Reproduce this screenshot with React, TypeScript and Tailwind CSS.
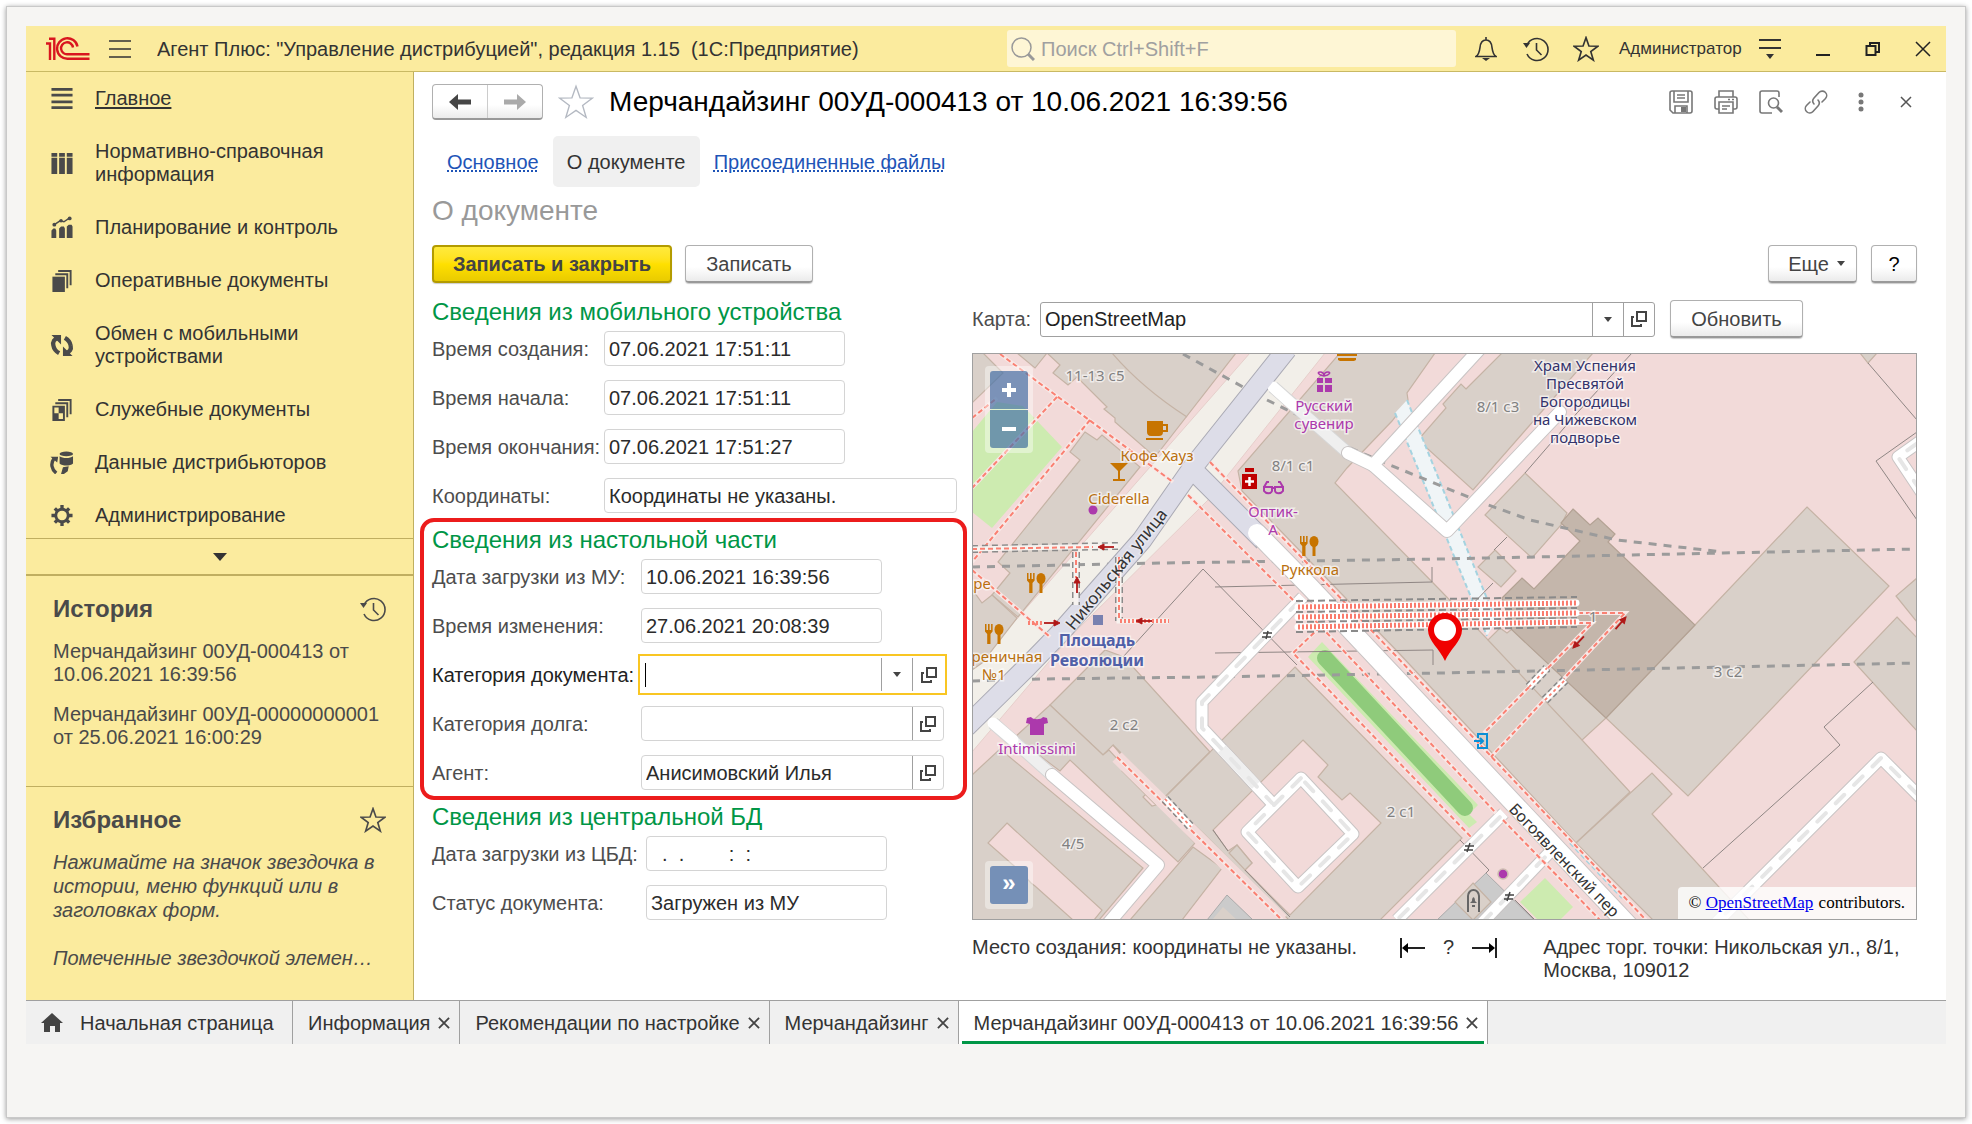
import type { ReactNode } from "react";

const NAV = [
  { label: "Главное", icon: "lines", active: true },
  { label: "Нормативно-справочная информация", icon: "books" },
  { label: "Планирование и контроль", icon: "chart" },
  { label: "Оперативные документы", icon: "docs" },
  { label: "Обмен с мобильными устройствами", icon: "sync" },
  { label: "Служебные документы", icon: "service" },
  { label: "Данные дистрибьюторов", icon: "database" },
  { label: "Администрирование", icon: "gear" },
];

const TABS = [
  { label: "Информация" },
  { label: "Рекомендации по настройке" },
  { label: "Мерчандайзинг" },
  { label: "Мерчандайзинг 00УД-000413 от 10.06.2021 16:39:56", active: true },
];

const NAV_ICONS: Record<string, ReactNode> = {
  lines: <path d="M1 1h22v3H1zM1 7h22v3H1zM1 14h22v3H1zM1 20h22v3H1z" />,
  books: (
    <path d="M1 1h6v4H1zM9 1h6v4H9zM17 1h6v4h-6zM1 6h6v17H1zM9 6h6v17H9zM17 6h6v17h-6z" />
  ),
  chart: (
    <>
      <path d="M1 15l2-2h2l1 2v8H1zM9 13l2-2h3l1 2v10H9zM17 11l2-2h3l1 2v12h-6z" />
      <path d="M4 9l6-4 4 1 6-4" fill="none" stroke="currentColor" strokeWidth="1.5" />
      <circle cx="4" cy="9" r="2" />
      <circle cx="11" cy="5" r="1.8" />
      <circle cx="20" cy="2.5" r="2" />
    </>
  ),
  docs: (
    <>
      <path d="M2 8h13v16H2z" />
      <path d="M5 5.5h12.500V20M8 2h13v15" fill="none" stroke="currentColor" strokeWidth="2" />
    </>
  ),
  sync: (
    <>
      <path d="M8 4C4 5 2 8 3 12c.5 3 2.500 6 6 8" fill="none" stroke="currentColor" strokeWidth="4.500" />
      <path d="M16 20c4-1 6-4 5-8-.5-3-2.500-6-6-8" fill="none" stroke="currentColor" strokeWidth="4.500" />
      <path d="M1 1h10v10zM23 23H13V13z" />
    </>
  ),
  service: (
    <>
      <path d="M3 9h11v14H3z" fill="none" stroke="currentColor" strokeWidth="2" />
      <path d="M8.500 9H14v7H8.500zM3 16h5.500v7H3z" />
      <path d="M5 5.500h12.500V20M8 2h13v15" fill="none" stroke="currentColor" strokeWidth="2" />
    </>
  ),
  database: (
    <>
      <ellipse cx="16.500" cy="3" rx="7" ry="2.500" />
      <path d="M9.500 5.500c3 2.500 11 2.500 14 0V13c-3 3-11 3-14 0z" />
      <path d="M6 23C1 19 0 13 3.500 8" fill="none" stroke="currentColor" strokeWidth="3.500" />
      <path d="M0 6h8l-1 6zM11 24l2-7 6-1-1 5-4 3z" />
    </>
  ),
  gear: (
    <>
      <circle cx="12" cy="12" r="6.500" fill="none" stroke="currentColor" strokeWidth="3" />
      <path
        d="M12 1v4M12 19v4M1 12h4M19 12h4M4.500 4.500l2.500 2.500M17 17l2.500 2.500M4.500 19.500L7 17M17 7l2.500-2.500"
        stroke="currentColor"
        strokeWidth="3.500"
      />
    </>
  ),
};

const Star = ({ size, color, width = 1.5 }: { size: number; color: string; width?: number }) => (
  <svg width={size} height={size} viewBox="0 0 24 24" fill="none" stroke={color} strokeWidth={width}>
    <path d="M12 1.500l2.700 7.700 8.300.2-6.600 4.900 2.400 8-6.800-4.700-6.800 4.700 2.400-8L1 9.400l8.300-.2z" />
  </svg>
);

const History = ({ color = "#333" }: { color?: string }) => (
  <svg width="26" height="26" viewBox="0 0 26 26" fill="none" stroke={color} strokeWidth="1.600">
    <path d="M4 9a11 11 0 1 1 0 9" />
    <path d="M13.500 7v7l5 5" />
    <path d="M0 7h7l-3.500 5z" fill={color} stroke="none" />
  </svg>
);

const OpenIcon = () => (
  <svg width="16" height="16" viewBox="0 0 16 16" fill="none" stroke="#444" strokeWidth="2">
    <path d="M6 1h9v9H6zM3 6H1v9h9v-2" />
  </svg>
);

const Caret = () => (
  <svg width="8" height="5" viewBox="0 0 8 5" fill="#444">
    <path d="M0 0h8L4 5z" />
  </svg>
);

const CloseX = () => (
  <svg width="12" height="12" viewBox="0 0 13 13" stroke="#444" strokeWidth="2">
    <path d="M1 1l11 11M12 1L1 12" />
  </svg>
);

function TitleBar() {
  return (
    <header className="flex h-[46px] items-center border-b border-[#c9b964] bg-[#fbeb9e] pl-5">
      <svg width="44" height="24" viewBox="0 0 44 24" fill="none" stroke="#d9161f" strokeWidth="2.400">
        <path d="M0 6.500h4V23M3 1.700h5.300V23" />
        <path d="M31.500 9.500A10.300 10.300 0 1 0 22 21.800H43.500" />
        <path d="M27 10.500A6 6 0 1 0 22 17.200H43.500" />
      </svg>
      <button aria-label="Меню" className="ml-[19px]">
        <svg width="22" height="18" viewBox="0 0 22 18" stroke="#333" strokeWidth="1.600">
          <path d="M0 1h22M0 9h22M0 17h22" />
        </svg>
      </button>
      <h1 className="ml-[26px] flex-1 truncate text-xl text-[#333]">
        Агент Плюс: "Управление дистрибуцией", редакция 1.15&nbsp; (1С:Предприятие)
      </h1>
      <label className="flex h-[37px] w-[449px] items-center gap-[6px] rounded-[3px] bg-[#fef6d5] pl-1">
        <svg width="24" height="24" viewBox="0 0 24 24" fill="none" stroke="#999">
          <circle cx="10.500" cy="10.500" r="9.500" strokeWidth="1.500" />
          <path d="M17 17l6 6" strokeWidth="3" />
        </svg>
        <input
          aria-label="Поиск"
          placeholder="Поиск Ctrl+Shift+F"
          className="flex-1 bg-transparent text-xl outline-none placeholder:text-[#a0a0a0]"
        />
      </label>
      <div className="-mr-[2px] ml-[5px] flex items-center [&_button]:flex [&_button]:w-[50px] [&_button]:justify-center">
        <button aria-label="Уведомления">
          <svg width="22" height="24" viewBox="0 0 22 24" fill="none" stroke="#333" strokeWidth="1.600">
            <path d="M1 19.500c3-2 3.500-5 4-9C5.500 5 7.500 3 11 3s5.500 2 6 7.500c.5 4 1 7 4 9zM11 0v3" />
            <path d="M7 21h8l-4 3z" fill="#333" stroke="none" />
          </svg>
        </button>
        <button aria-label="История">
          <History />
        </button>
        <button aria-label="Избранное">
          <Star size={26} color="#333" />
        </button>
        <a href="#" className="w-[134px] pl-2 text-[17px] text-[#333]">
          Администратор
        </a>
        <button aria-label="Сервис">
          <svg width="22" height="22" viewBox="0 0 22 22" stroke="#333" strokeWidth="2">
            <path d="M0 2h22M0 10h22" />
            <path d="M7 16h8l-4 5z" fill="#333" stroke="none" />
          </svg>
        </button>
        <div className="ml-[3px] flex items-center">
          <button aria-label="Свернуть">
            <svg width="16" height="16" viewBox="0 0 16 16" fill="#222">
              <path d="M1 13h14v2H1z" />
            </svg>
          </button>
          <button aria-label="Развернуть">
            <svg width="16" height="16" viewBox="0 0 16 16" fill="none" stroke="#222" strokeWidth="2">
              <path d="M1.500 5h9v9h-9zM5 5V2h9v9h-3.500" />
            </svg>
          </button>
          <button aria-label="Закрыть">
            <svg width="16" height="16" viewBox="0 0 16 16" stroke="#222" strokeWidth="1.500">
              <path d="M1 1l14 14M15 1L1 15" />
            </svg>
          </button>
        </div>
      </div>
    </header>
  );
}

function Sidebar() {
  return (
    <aside className="w-[388px] shrink-0 border-r border-[#c0b060] bg-[#fbeb9e] text-xl leading-[23px] text-[#333]">
      <nav className="h-[466px]">
        {NAV.map((item) => (
          <a key={item.label} href="#" className="flex items-center py-[15px] pr-10 pl-6">
            <svg width="24" height="23" viewBox="0 0 24 24" fill="currentColor" className="mr-[21px] shrink-0 text-[#4a4a4a]">
              {NAV_ICONS[item.icon]}
            </svg>
            <span className={item.active ? "underline underline-offset-2" : ""}>{item.label}</span>
          </a>
        ))}
      </nav>
      <button aria-label="Еще разделы" className="flex h-[38px] w-full items-center justify-center border-t border-b-2 border-[#c0ae60]">
        <svg width="14" height="8" viewBox="0 0 14 8" fill="#333">
          <path d="M0 0h14L7 8z" />
        </svg>
      </button>
      <section className="h-[210px] px-[27px] pt-5 text-[#4a4a4a]">
        <div className="mb-[18px] flex items-center justify-between">
          <h2 className="text-2xl leading-6 font-bold">История</h2>
          <History color="#4a4a4a" />
        </div>
        <a href="#" className="mb-[17px] block">
          Мерчандайзинг 00УД-000413 от 10.06.2021 16:39:56
        </a>
        <a href="#" className="block">
          Мерчандайзинг 00УД-00000000001 от 25.06.2021 16:00:29
        </a>
      </section>
      <section className="border-t border-[#c0ae60] px-[27px] pt-5 pb-[30px] leading-6 text-[#4a4a4a] italic">
        <div className="mb-[17px] flex items-center justify-between not-italic">
          <h2 className="text-2xl leading-6 font-bold">Избранное</h2>
          <Star size={26} color="#4a4a4a" />
        </div>
        <p>Нажимайте на значок звездочка в истории, меню функций или в заголовках форм.</p>
        <p className="mt-6 mr-2 truncate">Помеченные звездочкой элементы</p>
      </section>
    </aside>
  );
}

function GreyButton({ className = "", children, label }: { className?: string; children: ReactNode; label?: string }) {
  return (
    <button
      aria-label={label}
      className={`flex h-[38px] items-center justify-center rounded-[4px] border border-b-2 border-[#b0b0b0] border-b-[#999] bg-gradient-to-b from-white from-60% to-[#ebebeb] text-xl text-[#444] shadow-[0_1px_1px_#ccc] ${className}`}
    >
      {children}
    </button>
  );
}

type FieldProps = {
  id: string;
  label: string;
  value?: string;
  labelWidth: string;
  width?: string;
  open?: boolean;
};

function Field({ id, label, value = "", labelWidth, width = "w-[241px]", open }: FieldProps) {
  return (
    <div className="mb-[14px] flex h-[35px] items-center last:mb-0">
      <label htmlFor={id} className={`shrink-0 whitespace-nowrap text-[#4d4d4d] ${labelWidth}`}>
        {label}
      </label>
      <div className={`flex h-[35px] rounded-[4px] border border-[#d4d4d4] ${width}`}>
        <input id={id} defaultValue={value} className="min-w-0 flex-1 bg-transparent px-1 whitespace-pre text-[#2b2b2b] outline-none" />
        {open && (
          <button aria-label="Открыть" className="flex w-[31px] items-center justify-center border-l border-[#a0a0a0]">
            <OpenIcon />
          </button>
        )}
      </div>
    </div>
  );
}

const Heading = ({ children }: { children: ReactNode }) => (
  <h3 className="mb-[7px] text-2xl leading-6 text-[#009646]">{children}</h3>
);

function DocumentForm() {
  return (
    <form className="w-[540px] shrink-0 text-xl">
      <section>
        <Heading>Сведения из мобильного устройства</Heading>
        <Field id="created" label="Время создания:" value="07.06.2021 17:51:11" labelWidth="w-[172px]" />
        <Field id="started" label="Время начала:" value="07.06.2021 17:51:11" labelWidth="w-[172px]" />
        <Field id="finished" label="Время окончания:" value="07.06.2021 17:51:27" labelWidth="w-[172px]" />
        <Field id="coords" label="Координаты:" value="Координаты не указаны." labelWidth="w-[172px]" width="w-[353px]" />
      </section>
      <section className="mt-[5px] mr-[5px] -ml-3 rounded-[14px] border-4 border-[#ec1c1c] px-2 py-[6px]">
        <Heading>Сведения из настольной части</Heading>
        <Field id="loaded" label="Дата загрузки из МУ:" value="10.06.2021 16:39:56" labelWidth="w-[209px]" />
        <Field id="changed" label="Время изменения:" value="27.06.2021 20:08:39" labelWidth="w-[209px]" />
        <div className="mb-[14px] flex h-[35px] items-center">
          <label htmlFor="category" className="w-[209px] shrink-0 whitespace-nowrap text-[#222]">
            Категория документа:
          </label>
          <div className="flex h-[35px] w-[303px] items-center outline-2 outline-offset-1 outline-[#f9c623]">
            <span className="ml-1 h-6 w-px bg-black" />
            <input id="category" className="min-w-0 flex-1 bg-transparent outline-none" />
            <button aria-label="Выбрать" className="flex h-[33px] w-[31px] items-center justify-center border-l border-[#a0a0a0]">
              <Caret />
            </button>
            <button aria-label="Открыть" className="flex h-[33px] w-8 items-center justify-center border-l border-[#a0a0a0]">
              <OpenIcon />
            </button>
          </div>
        </div>
        <Field id="debt" label="Категория долга:" labelWidth="w-[209px]" width="w-[303px]" open />
        <Field id="agent" label="Агент:" value="Анисимовский Илья" labelWidth="w-[209px]" width="w-[303px]" open />
      </section>
      <section className="mt-[5px]">
        <Heading>Сведения из центральной БД</Heading>
        <Field id="loadedCentral" label="Дата загрузки из ЦБД:" value="  .  .        :  :" labelWidth="w-[214px]" />
        <Field id="status" label="Статус документа:" value="Загружен из МУ" labelWidth="w-[214px]" />
      </section>
    </form>
  );
}

const BUILDINGS = [
  "0,0 11,0 31,20 0,50",
  "45,0 63,15 75,0",
  "75,0 88,12 81,20 96,32 105,24 135,54 132,56 143,65 143,69 183,104 264,0",
  "113,79 125,87 130,82 168,114 46,264 20,242 38,220 26,209 108,107 98,99",
  "0,236 10,250 20,242 45,265 10,310 0,317",
  "368,0 463,0 435,40 436,47 420,68 375,115 363,130 468,237 516,287 528,275 535,280 540,276 634,365 610,387 658,439 604,490 468,344 425,298 270,138 266,118",
  "494,36 530,0 621,0 501,137 446,87 474,55 471,51 489,31",
  "553,120 595,160 589,172 560,205 513,162",
  "523,197 544,218 529,234 506,214",
  "835,154 917,233 716,443 634,365 723,272",
  "945,225 924,243 945,269",
  "925,264 945,285 945,378 882,309",
  "888,0 905,0 896,10",
  "604,490 680,420 700,441 680,461 780,570 684,570",
  "78,352 133,297 152,304 238,399 193,444 141,392 131,402",
  "323,314 490,485 408,567 317,567 233,482 193,444",
  "0,422 28,396 171,515 127,567 0,567",
  "43,384 78,352 131,402 137,397 223,490 206,509 98,407 88,418",
  "221,494 250,515 210,567 158,567",
];

// footways, drawn as dashed salmon lines
const FOOTWAYS = [
  "M28 1L201 129",
  "M0 65L25 45M85 44L0 135",
  "M118 67L0 209",
  "M0 217L78 284",
  "M216 142L321 247M338 262L524 460M531 467L628 567",
  "M238 109L425 304L674 567",
  "M348 274L321 300L499 484",
  "M145 404L221 479L310 567",
  "M606 260H653L519 404",
  "M606 270H620L512 380",
];

const TRACKS = [
  "M211 1L271 34M295 47L330 64M378 95L418 112L511 150L558 167L645 187L751 199",
  "M0 214L188 210L468 206L751 200L945 196",
  "M0 328L68 326L238 324L468 320L945 310",
];

const SERVICE_ROADS = [
  "M331 244L230 349L230 375L246 392L300 450",
  "M329 425L381 481L326 534L275 479Z",
  "M532 460L425 567",
  "M577 500L510 570",
  "M950 446L909 405L744 570",
  "M950 87L926 104L950 140",
];

const STREETS = ["M376 100L401 112L515 -12", "M401 112L475 178L588 59", "M80 422L186 512L135 572"];

type MapLabel = [text: string, x: number, y: number, color: string];

const LABELS: MapLabel[] = [
  ["11-13 с5", 123, 28, "#808080"],
  ["8/1 с1", 321, 118, "#808080"],
  ["8/1 с3", 526, 59, "#808080"],
  ["2 с2", 152, 377, "#808080"],
  ["4/5", 101, 496, "#808080"],
  ["2 с1", 429, 464, "#808080"],
  ["3 с2", 756, 324, "#808080"],
  ["1", 621, 269, "#808080"],
  ["Кофе Хауз", 185, 108, "#b9700f"],
  ["Ciderella", 147, 151, "#b9700f"],
  ["Руккола", 338, 222, "#b9700f"],
  ["ре", 10, 236, "#b9700f"],
  ["реничная", 35, 309, "#b9700f"],
  ["№1", 22, 327, "#b9700f"],
  ["Русский", 352, 58, "#ac39ac"],
  ["сувенир", 352, 76, "#ac39ac"],
  ["Оптик-", 301, 164, "#ac39ac"],
  ["А", 301, 182, "#ac39ac"],
  ["Intimissimi", 65, 401, "#ac39ac"],
  ["Храм Успения", 613, 18, "#33336b"],
  ["Пресвятой", 613, 36, "#33336b"],
  ["Богородицы", 613, 54, "#33336b"],
  ["на Чижевском", 613, 72, "#33336b"],
  ["подворье", 613, 90, "#33336b"],
];

const Cutlery = ({ x, y }: { x: number; y: number }) => (
  <g transform={`translate(${x} ${y})`} fill="#c77400">
    <path d="M0 0h1.500v6H3V0h1.600v6h1.500V0h1.500v7.500L5.500 10v10H2.200V10L0 7.500z" />
    <ellipse cx="14" cy="5.500" rx="4.500" ry="5.500" />
    <path d="M12.500 9h3v11h-3z" />
  </g>
);

const Arrow = ({ x, y, angle, length = 16 }: { x: number; y: number; angle: number; length?: number }) => (
  <g transform={`translate(${x} ${y}) rotate(${angle})`} stroke="#b01818" fill="#b01818">
    <path d={`M${-length} 0H-3`} strokeWidth="1.800" />
    <path d="M0 0l-6-3v6z" strokeWidth="1" />
  </g>
);

function CityMap() {
  return (
    <svg viewBox="1 1 943 565" preserveAspectRatio="xMidYMid slice" className="block h-[565px] w-full bg-[#f2dad9]">
      <path d="M278 0H353L236 147L98 284L0 399V317Z" fill="#f2efe9" stroke="#e6cfcb" />
      <path d="M0 79L25 49L51 53L90 94L20 175L0 159Z" fill="#cdebb0" />
      <path d="M573 525L601 554L588 567H566L548 549Z" fill="#cdebb0" />
      <path d="M514 520L465 567H562ZM255 542L281 567H235Z" fill="#cbcbcb" stroke="#aaa" />
      <path d="M251 554L265 567H240Z" fill="#d9d0c9" />
      <g fill="#d9d0c9" stroke="#c5b3a5" strokeWidth="1.200">
        {BUILDINGS.map((points) => (
          <polygon key={points} points={points} />
        ))}
        <path d="M140 0Q170 35 215 64M516 287L610 387M238 399L193 444" fill="none" />
        <path
          d="M331 387L356 412L346 424L370 447L378 440L409 470L318 562L273 517L280 510L265 492L256 498L241 477ZM35 470L130 557L122 567H101L63 533L59 530L49 519L16 490ZM141 392L158 409L150 418L184 452L180 453L171 444L178 437Z"
          fill="#f2dad9"
        />
        <path d="M265 492L280 510L273 517L257 500ZM501 530L519 549L501 567L483 549Z" />
        <path
          d="M601 156L618 172L626 165L643 181L636 189L723 272L634 365L540 277L530 245L550 225L562 236L608 188L589 170Z"
          fill="#c4b6ab"
          stroke="#b3a294"
        />
      </g>
      <path d="M145 404L221 479L310 567" fill="none" stroke="#f2dad9" strokeWidth="13" />
      <path d="M350 289L336 304L497 475L505 469L497 461L506 452Z" fill="#cdebb0" />
      <path d="M353 305L493 455" stroke="#8fcb7b" strokeWidth="16" strokeLinecap="round" />
      <path d="M423 60L435 47L524 268L515 283Z" fill="#f0f5f7" />
      <path d="M423 60L515 283M435 47L524 268M598 490L650 545" fill="none" stroke="#a4d3e0" strokeWidth="2" strokeDasharray="5 3" />
      <g fill="none" stroke="#8f8684" strokeWidth="1">
        <path d="M243 234L460 229V214M151 304L231 216L325 312M243 300L461 297V312" />
        <path d="M896 10L945 67M945 79L904 108L945 167M901 329L852 374L868 392L731 515" />
        <path d="M660 0L605 60L553 120M535 184L522 197M521 230L490 262M241 477L256 498M273 517L318 564" />
        <path d="M488 487L517 517L514 520M543 547L562 566" />
      </g>
      <g fill="none" stroke="#9b9b9b" strokeWidth="3" strokeDasharray="8 7">
        {TRACKS.map((d) => (
          <path key={d} d={d} />
        ))}
      </g>
      <g fill="none" strokeLinejoin="round">
        <path d="M315 -4L221 114L170 187L88 280L55 314L-6 374M224 120L292 188" stroke="#aaaab4" strokeWidth="21" />
        <path d="M376 100L301 34M21 370L80 422" stroke="#d6d6d6" strokeWidth="13" />
        <path d="M376 100L301 34M21 370L80 422" stroke="#efefef" strokeWidth="11" />
        {STREETS.map((d) => (
          <path key={d} d={d} stroke="#c8c4c4" strokeWidth="14" strokeLinecap="round" />
        ))}
        {SERVICE_ROADS.map((d) => (
          <path key={d} d={d} stroke="#c8c4c4" strokeWidth="13" />
        ))}
        <path d="M285 180L338 234L662 578" stroke="#c8c4c4" strokeWidth="20" strokeLinecap="round" />
        {STREETS.map((d) => (
          <path key={d} d={d} stroke="#fff" strokeWidth="12" strokeLinecap="round" />
        ))}
        <path d="M301 34L322 53M21 370L41 387" stroke="#fff" strokeWidth="11" strokeLinecap="round" />
        {SERVICE_ROADS.map((d) => (
          <path key={d} d={d} stroke="#fff" strokeWidth="11" />
        ))}
        <path d="M250 396L284 432" stroke="#efefef" strokeWidth="11" />
        {SERVICE_ROADS.map((d) => (
          <path key={d} d={d} stroke="#e6e6e6" strokeWidth="4" strokeDasharray="12 14" strokeDashoffset="-6" strokeLinecap="round" />
        ))}
        <path d="M315 -4L221 114L170 187L88 280L55 314L-6 374M224 120L290 186" stroke="#dddde8" strokeWidth="19" />
        <path d="M285 180L338 234L662 578" stroke="#fff" strokeWidth="18" strokeLinecap="round" />
      </g>
      <g fill="none">
        {FOOTWAYS.map((d) => (
          <path key={d} d={d} stroke="#f8e8e6" strokeWidth="4" />
        ))}
        {FOOTWAYS.map((d) => (
          <path key={d} d={d} stroke="#fa8072" strokeWidth="2" strokeDasharray="5 3" />
        ))}
        <path d="M193 446L219 474M557 334L575 315M573 347L593 327" stroke="#8a8a8a" strokeWidth="9" strokeDasharray="5 3" />
        <path d="M193 446L219 474M557 334L575 315M573 347L593 327" stroke="#fff" strokeWidth="6" />
        <path d="M193 446L219 474M557 334L575 315M573 347L593 327" stroke="#fa8072" strokeWidth="1.800" strokeDasharray="3 3" />
      </g>
      <g fill="none">
        <path d="M0 196L146 193M104 199V252M147 204V268" stroke="#8a8a8a" strokeWidth="8" strokeDasharray="6 4" />
        <path d="M0 196L146 193M104 199V252M147 204V268H197" stroke="#f7f3f0" strokeWidth="5" />
        <path d="M0 196L121 194M104 199V225M147 204V268" stroke="#fa8072" strokeWidth="2" strokeDasharray="5 3" />
        <path d="M148 268H197M56 270H72" stroke="#fa8072" strokeWidth="4" strokeDasharray="2 2" />
        <path d="M324 248L605 244M324 259L605 255M324 269L605 265M324 279L605 274" stroke="#8a8a8a" strokeWidth="2" strokeDasharray="7 4" />
        <path d="M326 254L604 250M326 264L604 260M326 274L604 269" stroke="#fff" strokeWidth="7" strokeLinecap="round" />
        <path d="M326 254L604 250M326 264L604 260M326 274L604 269" stroke="#fa7a6c" strokeWidth="5" strokeDasharray="2 2" />
      </g>
      <Arrow x={126} y={194} angle={180} />
      <Arrow x={105} y={224} angle={-90} />
      <Arrow x={164} y={268} angle={180} />
      <Arrow x={88} y={270} angle={0} />
      <Arrow x={654} y={264} angle={-49} />
      <Arrow x={601} y={295} angle={133} />

      <g fill="#c77400">
        <path d="M175 68h16v3h5v8h-5c0 3-2 4-4 4h-8c-3 0-4-2-4-4zm16 5v4h3v-4zM174 85h17v2h-17z" />
        <path d="M138 110h18l-8 8v8h5v2h-12v-2h5v-8z" />
        <path d="M365 0h20v3h-20zM366 5h18v2l-2 1h-14l-2-1z" />
      </g>
      <Cutlery x={328} y={183} />
      <Cutlery x={55} y={220} />
      <Cutlery x={13} y={271} />
      <g fill="#ac39ac">
        <circle cx="121" cy="157" r="4.500" />
        <path d="M345 25h6v5h-6zM353 25h7v5h-7zM345 32h6v7h-6zM353 32h7v7h-7z" />
        <path d="M59 364c2 3 10 3 12 0l4 1 1 5-4 1v11H58v-11l-4-1 1-5z" />
        <circle cx="531" cy="521" r="5" stroke="#cdbdb1" strokeWidth="1.500" />
      </g>
      <path d="M352 23c-6-1-7-4-4-4s4 2 4 4c0-2 1-4 4-4s2 3-4 4z" fill="none" stroke="#ac39ac" strokeWidth="1.600" />
      <g fill="none" stroke="#ac39ac" strokeWidth="2">
        <path d="M292 134h8v4c-1 3-6 3-8 0zM303 134h8v4c-2 3-7 3-8 0zM300 135h3M292 134l3-5h2M311 134l-3-5h-2" />
      </g>
      <path d="M273 115h9v4h-9zM270 121h15v15h-15z" fill="#bf0000" />
      <path d="M277.500 124v9M273 128.500h9" stroke="#fff" strokeWidth="2.500" />
      <path d="M121 262h10v10h-10z" fill="#7981b0" />
      <path d="M506 385v-4h9v14h-9v-4M502 388h9M508 385l3 3-3 3" fill="none" stroke="#0a8fd6" strokeWidth="2" />
      <path d="M496 559v-16a5.500 6 0 0 1 11 0v16" fill="none" stroke="#666" strokeWidth="2" />
      <path d="M498 550l2-2c0-5 3-5 3 0l2 2zM500 552h3v2h-3z" fill="#666" />
      <path d="M291 280h9M290 284h9M296 278l-2 8M493 493h9M492 497h9M498 490l-3 9M533 542h9M532 546h9M538 539l-3 9" stroke="#444" strokeWidth="1.500" />

      <g fontFamily='"Noto Sans", sans-serif' fontSize="15" textAnchor="middle" stroke="#fff" strokeOpacity="0.6" strokeWidth="3" paintOrder="stroke">
        {LABELS.map(([text, x, y, color]) => (
          <text key={text + x} x={x} y={y} fill={color}>
            {text}
          </text>
        ))}
        <g fontWeight="700" fontSize="16" fill="#5060a8">
          <text x="125" y="293">Площадь</text>
          <text x="125" y="313">Революции</text>
        </g>
        <g fontSize="17" fill="#333" strokeOpacity="0.3">
          <text transform="translate(149 220) rotate(-51)">Никольская улица</text>
          <text textAnchor="start" fontSize="16" transform="translate(536 457) rotate(46)">
            Богоявленский пер
          </text>
        </g>
      </g>
      <path d="M473 308C468 296 456 288 456 277a17 17 0 0 1 34 0C490 288 478 296 473 308Z" fill="#f00000" />
      <circle cx="473" cy="277" r="11" fill="#fff" />
    </svg>
  );
}

function MapPanel() {
  return (
    <div className="min-w-0 flex-1 text-xl text-[#333]">
      <div className="flex h-[38px] items-center">
        <label htmlFor="map" className="w-[68px] shrink-0 text-[#4d4d4d]">
          Карта:
        </label>
        <div className="relative flex h-[35px] flex-1 rounded-[3px] border border-[#a0a0a0]">
          <select id="map" className="min-w-0 flex-1 appearance-none bg-transparent px-1 text-[#222] outline-none">
            <option>OpenStreetMap</option>
          </select>
          <span className="flex w-[31px] items-center justify-center border-l border-[#a0a0a0]">
            <Caret />
          </span>
          <button aria-label="Открыть" className="flex w-[31px] items-center justify-center border-l border-[#a0a0a0]">
            <OpenIcon />
          </button>
        </div>
        <GreyButton className="mr-[114px] ml-[15px] w-[133px]">Обновить</GreyButton>
      </div>
      <div className="relative mt-[15px] border border-[#a0a0a0]">
        <CityMap />
        <div className="absolute top-3 left-3 flex flex-col gap-px rounded-[4px] bg-white/40 p-[5px] text-white">
          <button aria-label="Приблизить" className="flex size-[38px] items-center justify-center rounded-t-[3px] bg-[#003c88]/50">
            <svg width="14" height="14" viewBox="0 0 14 14" stroke="#fff" strokeWidth="4">
              <path d="M0 7h14M7 0v14" />
            </svg>
          </button>
          <button aria-label="Отдалить" className="flex size-[38px] items-center justify-center rounded-b-[3px] bg-[#003c88]/50">
            <svg width="14" height="14" viewBox="0 0 14 14" stroke="#fff" strokeWidth="4">
              <path d="M0 7h14" />
            </svg>
          </button>
        </div>
        <div className="absolute bottom-[10px] left-3 rounded-[4px] bg-white/40 p-[5px]">
          <button aria-label="Обзорная карта" className="flex size-[38px] items-center justify-center rounded-[3px] bg-[#7590b7] pb-1 text-2xl font-bold text-white">
            »
          </button>
        </div>
        <p className="absolute right-0 bottom-0 rounded-tl-[4px] bg-white/80 px-[11px] py-1 font-['Liberation_Serif',serif] text-[17px] leading-6 text-black">
          ©{" "}
          <a href="#" className="mr-px text-[#0000ee] underline">
            OpenStreetMap
          </a>{" "}
          contributors.
        </p>
      </div>
      <div className="mt-4 flex leading-[23px]">
        <p className="w-[428px] shrink-0">Место создания: координаты не указаны.</p>
        <div className="flex h-[23px] shrink-0 items-center gap-[18px]">
          <button aria-label="К началу">
            <svg width="25" height="20" viewBox="0 0 25 20" stroke="#222" strokeWidth="2">
              <path d="M1 0v20M5 10h20" />
              <path d="M2 10l6-5v10z" fill="#000" stroke="none" />
            </svg>
          </button>
          <button aria-label="Справка">?</button>
          <button aria-label="К концу">
            <svg width="25" height="20" viewBox="0 0 25 20" stroke="#222" strokeWidth="2">
              <path d="M24 0v20M0 10h20" />
              <path d="M23 10l-6-5v10z" fill="#000" stroke="none" />
            </svg>
          </button>
        </div>
        <p className="ml-[46px] min-w-0 flex-1">Адрес торг. точки: Никольская ул., 8/1, Москва, 109012</p>
      </div>
    </div>
  );
}

function Toolbar() {
  return (
    <div className="flex text-[#777] [&>button]:flex [&>button]:w-[45px] [&>button]:justify-center">
      <button aria-label="Сохранить">
        <svg width="24" height="24" viewBox="0 0 24 24" fill="none" stroke="currentColor" strokeWidth="1.600">
          <path d="M1 3a2 2 0 0 1 2-2h18a2 2 0 0 1 2 2v18a2 2 0 0 1-2 2H4l-3-3zM5 1v11h14V1M8 5h8M8 8h8M6 23v-7h12v7" />
          <path d="M12 17h5v5h-5z" fill="currentColor" stroke="none" />
        </svg>
      </button>
      <button aria-label="Печать">
        <svg width="24" height="24" viewBox="0 0 24 24" fill="none" stroke="currentColor" strokeWidth="1.600">
          <path d="M5 7V1h14v6M5 19H3a2 2 0 0 1-2-2V9a2 2 0 0 1 2-2h18a2 2 0 0 1 2 2v8a2 2 0 0 1-2 2h-2M5 12h14v11H5zM8 16h8M8 19h5M14 9.500h2M18 9.500h2" />
        </svg>
      </button>
      <button aria-label="Просмотр">
        <svg width="24" height="24" viewBox="0 0 24 24" fill="none" stroke="currentColor" strokeWidth="1.600">
          <path d="M20 7V3a2 2 0 0 0-2-2H3a2 2 0 0 0-2 2v18a2 2 0 0 0 2 2h10" />
          <circle cx="14.500" cy="13" r="5" />
          <path d="M18 17l5 5" strokeWidth="3" />
        </svg>
      </button>
      <button aria-label="Ссылка">
        <svg width="24" height="24" viewBox="0 0 24 24" fill="none" stroke="currentColor" strokeWidth="1.600" strokeLinecap="round">
          <path d="M10 14a4.500 4.500 0 0 1 0-6l5-5.500a4.300 4.300 0 0 1 6.500 6L18 12M14 10a4.500 4.500 0 0 1 0 6l-5 5.500a4.300 4.300 0 0 1-6.500-6L6 12" />
        </svg>
      </button>
      <button aria-label="Еще">
        <svg width="24" height="24" viewBox="0 0 24 24" fill="currentColor">
          <circle cx="12" cy="5" r="2.500" />
          <circle cx="12" cy="12" r="2.500" />
          <circle cx="12" cy="19" r="2.500" />
        </svg>
      </button>
      <button aria-label="Закрыть форму" className="items-center">
        <svg width="12" height="12" viewBox="0 0 12 12" stroke="#555" strokeWidth="1.500">
          <path d="M1 1l10 10M11 1L1 11" />
        </svg>
      </button>
    </div>
  );
}

function Main() {
  return (
    <main className="min-w-0 flex-1 bg-white pt-3 pr-[29px] pl-[18px] text-xl">
      <div className="flex h-9 items-center">
        <div className="flex h-9 w-[111px] rounded-[4px] border border-b-2 border-[#b0b0b0] border-b-[#999] bg-gradient-to-b from-white from-60% to-[#ebebeb]">
          <button aria-label="Назад" className="flex flex-1 items-center justify-center border-r border-[#ccc]">
            <svg width="22" height="16" viewBox="0 0 22 16" fill="#444">
              <path d="M0 8l9-8v5.500h13v5H9V16z" />
            </svg>
          </button>
          <button aria-label="Вперед" className="flex flex-1 items-center justify-center">
            <svg width="22" height="16" viewBox="0 0 22 16" fill="#aaa">
              <path d="M22 8l-9-8v5.500H0v5h13V16z" />
            </svg>
          </button>
        </div>
        <button aria-label="В избранное" className="mx-[15px]">
          <Star size={36} color="#b4b9c2" width={0.9} />
        </button>
        <h2 className="flex-1 truncate text-[28px] text-black">Мерчандайзинг 00УД-000413 от 10.06.2021 16:39:56</h2>
        <div className="-mr-[11px]">
          <Toolbar />
        </div>
      </div>
      <nav className="mt-4 flex h-[51px] items-center pl-[15px] text-[#1e54b7]">
        <a href="#" className="underline decoration-dotted underline-offset-2">
          Основное
        </a>
        <a href="#" className="mx-[14px] flex h-full w-[147px] items-center justify-center rounded-[5px] bg-[#f0f0f0] text-[#333]">
          О документе
        </a>
        <a href="#" className="underline decoration-dotted underline-offset-2">
          Присоединенные файлы
        </a>
      </nav>
      <h2 className="mt-2 text-[28px] leading-8 text-[#999]">О документе</h2>
      <div className="mt-[18px] flex h-[39px] items-start">
        <button className="h-[38px] w-[240px] rounded-[4px] border-2 border-[#b39b00] bg-gradient-to-b from-[#ffea3c] via-[#ffe000] to-[#e9cb00] font-bold text-[#444] shadow-[0_1px_1px_#ccc]">
          Записать и закрыть
        </button>
        <GreyButton className="ml-[13px] w-[128px]">Записать</GreyButton>
        <GreyButton className="ml-auto w-[89px] gap-2 pl-2">
          Еще <Caret />
        </GreyButton>
        <GreyButton className="ml-[14px] w-[46px] text-black">?</GreyButton>
      </div>
      <div className="mt-4 flex">
        <DocumentForm />
        <MapPanel />
      </div>
    </main>
  );
}

function TabBar() {
  return (
    <footer className="flex h-11 border-t border-[#a0a0a0] bg-[#f0f0f0] text-xl text-[#333]">
      <a href="#" className="flex w-[267px] items-center gap-[17px] border-r border-[#a0a0a0] pl-[15px]">
        <svg width="22" height="19" viewBox="0 0 22 19" fill="#444">
          <path d="M11 0l11 10h-3v9h-5v-6H9v6H3v-9H0z" />
        </svg>
        Начальная страница
      </a>
      {TABS.map((tab) => (
        <div
          key={tab.label}
          className={`flex items-center border-r border-[#a0a0a0] px-[3px] ${tab.active ? "bg-white" : ""}`}
        >
          <div className={`flex h-full items-center gap-2 border-b-3 pt-[3px] pr-[6px] pl-3 ${tab.active ? "border-[#009646]" : "border-transparent"}`}>
            <a href="#">{tab.label}</a>
            <button aria-label="Закрыть вкладку">
              <CloseX />
            </button>
          </div>
        </div>
      ))}
    </footer>
  );
}

export default function App() {
  return (
    <div className="flex min-h-screen bg-white p-[6px] font-['Liberation_Sans',Arial,sans-serif]">
      <div className="min-w-0 flex-1 border border-[#c9c9c9] bg-[#f6f5f3] p-[19px] shadow-[0_1px_5px_rgba(0,0,0,0.4)]">
        <TitleBar />
        <div className="flex">
          <Sidebar />
          <Main />
        </div>
        <TabBar />
      </div>
    </div>
  );
}
